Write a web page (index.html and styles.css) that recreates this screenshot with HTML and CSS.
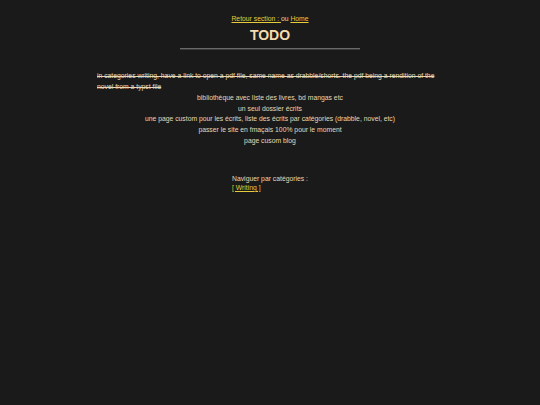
FILE: index.html
```html
<!DOCTYPE html>
<html lang="fr">
<head>
<meta charset="utf-8">
<title>TODO</title>
<link rel="stylesheet" href="styles.css">
</head>
<body>
<div class="page">
  <p class="nav"><a href="#">Retour section : </a>ou <a href="#">Home</a></p>
  <h1 class="title">TODO</h1>
  <hr class="rule">
  <ul class="todo">
    <li class="done">in categories writing, have a link to open a pdf file, same name as drabble/shorts. the pdf being a rendition of the novel from a typst file</li>
    <li>bibliothèque avec liste des livres, bd mangas etc</li>
    <li>un seul dossier écrits</li>
    <li>une page custom pour les écrits, liste des écrits par catégories (drabble, novel, etc)</li>
    <li>passer le site en fmaçais 100% pour le moment</li>
    <li>page cusom blog</li>
  </ul>
  <div class="cats">
    <div class="cats-box">
      <div>Naviguer par catégories :</div>
      <a href="#">[ Writing ]</a>
    </div>
  </div>
</div>
</body>
</html>
```
FILE: styles.css
```css
html, body {
  margin: 0;
  padding: 0;
  background: #1a1a1a;
}
body {
  font-family: "Liberation Sans", Arial, sans-serif;
  color: #e6d8b8;
  font-size: 6.8px;
}
.page {
  display: flex;
  flex-direction: column;
  align-items: center;
  padding-top: 14px;
}
.nav {
  margin: 0;
  line-height: 9px;
}
a {
  color: #e6cc3a;
  text-decoration: underline;
}
.title {
  margin: 4px 0 0;
  font-size: 14px;
  line-height: 16px;
  font-weight: bold;
  color: #f5dcae;
}
.rule {
  width: 180px;
  margin: 5px 0 0;
  border: none;
  border-top: 1px solid #6a6a6a;
  border-bottom: 1px solid #3a3a3a;
  height: 0;
}
.todo {
  list-style: none;
  margin: 21px 0 0;
  padding: 0;
  width: 346px;
  text-align: center;
  line-height: 10.85px;
}
.done {
  text-align: left;
  text-decoration: line-through;
}
.cats {
  margin-top: 27px;
  text-align: center;
  line-height: 9px;
}
.cats-box {
  display: inline-block;
  text-align: left;
}
```
